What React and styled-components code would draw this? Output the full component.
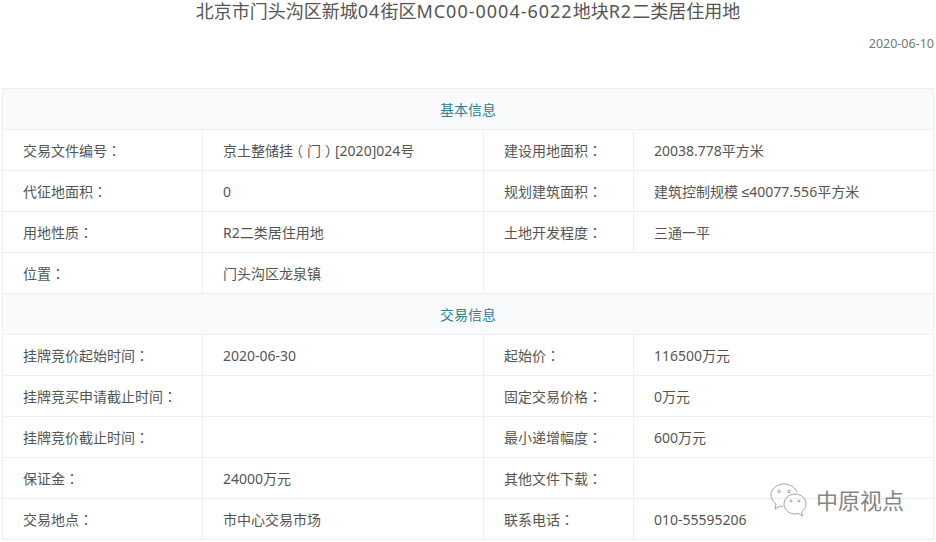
import React from "react";
import styled, { createGlobalStyle } from "styled-components";

const GlobalStyle = createGlobalStyle`
  html, body {
    margin: 0;
    padding: 0;
    background: #fff;
  }
  body {
    width: 936px;
    height: 542px;
    overflow: hidden;
    font-family: "Noto Sans", "Liberation Sans", "Noto Sans CJK SC", sans-serif;
    text-spacing-trim: space-all;
  }
`;

const basicRows = [
  ["交易文件编号：", "京土整储挂（门）[2020]024号", "建设用地面积：", "20038.778平方米"],
  ["代征地面积：", "0", "规划建筑面积：", "建筑控制规模 ≤40077.556平方米"],
  ["用地性质：", "R2二类居住用地", "土地开发程度：", "三通一平"],
  ["位置：", "门头沟区龙泉镇", ""],
];

const tradeRows = [
  ["挂牌竞价起始时间：", "2020-06-30", "起始价：", "116500万元"],
  ["挂牌竞买申请截止时间：", "", "固定交易价格：", "0万元"],
  ["挂牌竞价截止时间：", "", "最小递增幅度：", "600万元"],
  ["保证金：", "24000万元", "其他文件下载：", ""],
  ["交易地点：", "市中心交易市场", "联系电话：", "010-55595206"],
];

const titleParts = ["北京市门头沟区新城", "04", "街区", "MC00-0004-6022", "地块", "R2", "二类居住用地"];

// full-width punctuation sits centred in the reference
const shifts = { "：": 0, "（": -4, "）": 4 };

const CellText = ({ text }) =>
  text.split(/([：（）])/).map((part, index) =>
    index % 2 ? (
      <Punct key={index} $shift={shifts[part]}>
        {part}
      </Punct>
    ) : (
      part
    )
  );

const Section = ({ title, rows }) => (
  <tbody>
    <tr>
      <HeadCell colSpan={4}>{title}</HeadCell>
    </tr>
    {rows.map((row) => (
      <tr key={row[0]}>
        {row.map((text, index) => (
          <Cell key={index} colSpan={row.length === 3 && index === 2 ? 2 : 1}>
            <CellText text={text} />
          </Cell>
        ))}
      </tr>
    ))}
  </tbody>
);

const App = () => (
  <Page>
    <GlobalStyle />
    <Title>
      {titleParts.map((part, index) =>
        index % 2 ? <TitleLatin key={index}>{part}</TitleLatin> : part
      )}
    </Title>
    <DateLine>2020-06-10</DateLine>
    <Table>
      <colgroup>
        <col width="200" />
        <col width="281" />
        <col width="150" />
        <col width="300" />
      </colgroup>
      <Section title="基本信息" rows={basicRows} />
      <Section title="交易信息" rows={tradeRows} />
    </Table>
    <Watermark>
      <svg width="38" height="36" viewBox="0 0 38 36" fill="none" stroke="#999" strokeWidth="0.9">
        <path d="M14 2C7 2 1 7 1 13c0 4 2 7 5 9l-1 5 5-3c1 .4 2 .5 3 .5" />
        <path d="M14 2c6 0 11 3.500 13 8" />
        <path d="M25 12c-6 0-11 4.500-11 10s5 10 11 10c1.500 0 2.500-.2 3.500-.5l4 2.500-1-4c3-2 4.500-5 4.500-8 0-5.500-5-10-11-10z" />
        <circle cx="9" cy="9.500" r="1.300" />
        <circle cx="19" cy="9.500" r="1.300" />
        <circle cx="21" cy="19" r="1" />
        <circle cx="29" cy="19" r="1" />
      </svg>
      <WatermarkText>中原视点</WatermarkText>
    </Watermark>
  </Page>
);

const Page = styled.div`
  position: relative;
  width: 936px;
  height: 542px;
  overflow: hidden;
  background: #fff;
`;

const Title = styled.h1`
  margin: 0 0 2px;
  height: 22px;
  font-size: 18px;
  line-height: 22px;
  font-weight: 400;
  color: #555;
  text-align: center;
`;

const TitleLatin = styled.span`
  letter-spacing: 1px;
`;

const DateLine = styled.div`
  height: 64px;
  padding: 11px 2px 0 0;
  box-sizing: border-box;
  font-size: 12.500px;
  line-height: 17px;
  color: #777;
  text-align: right;
`;

const Table = styled.table`
  margin-left: 2px;
  width: 931px;
  table-layout: fixed;
  border-collapse: collapse;
`;

const HeadCell = styled.td`
  height: 40px;
  padding: 0;
  box-sizing: content-box;
  border: 1px solid #eceef0;
  background: #f8fafc;
  color: #2f7f93;
  font-size: 14px;
  text-align: center;
`;

const Cell = styled.td`
  height: 40px;
  padding: 0 0 0 20px;
  box-sizing: content-box;
  border: 1px solid #eceef0;
  color: #555;
  font-size: 14px;
  white-space: nowrap;
`;

const Punct = styled.span`
  display: inline-block;
  font-family: "Noto Sans CJK TC", sans-serif;
  transform: translateX(${(props) => props.$shift}px);
`;

const Watermark = styled.div`
  position: absolute;
  left: 770px;
  top: 482px;
  display: flex;
  align-items: center;
  gap: 8px;
`;

const WatermarkText = styled.span`
  font-size: 22px;
  line-height: 36px;
  color: #858585;
`;

export default App;
